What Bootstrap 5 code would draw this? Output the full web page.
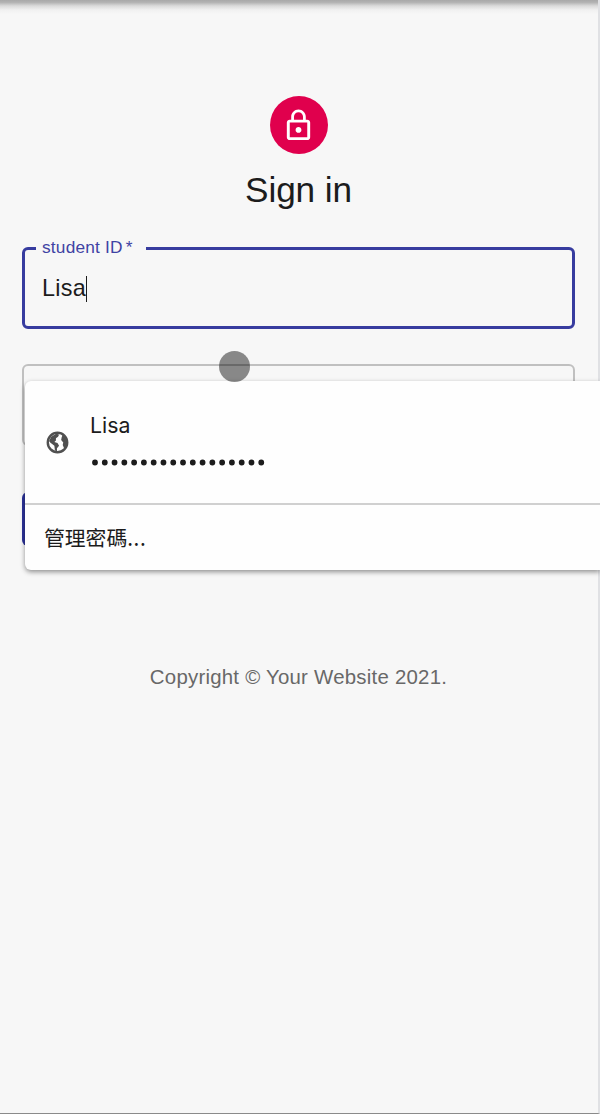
<!DOCTYPE html>
<html lang="zh-Hant">
<head>
<meta charset="utf-8">
<meta name="viewport" content="width=device-width, initial-scale=1">
<title>Sign in</title>
<link href="https://cdn.jsdelivr.net/npm/bootstrap@5.3.0/dist/css/bootstrap.min.css" rel="stylesheet">
<style>
  body { background: #f7f7f7; color: #1c1c1c; font-family: "Liberation Sans", Arial, sans-serif; height: 1114px; }
  .screen { height: 1114px; border-right: 2px solid #e0e1e4; border-bottom: 1px solid #8a8a8a; padding: 96px 23px 0 22px; }
  .top-shade { height: 14px; right: 2px; background: linear-gradient(#a8a8a8, #b4b4b4 18%, #dadada 42%, #f0f0f0 70%, #f7f7f7); }
  .avatar { width: 58px; height: 58px; background: #e0004d; }
  .title { font-size: 35.2px; line-height: 44px; margin: 14px 0 35px; letter-spacing: -.1px; font-weight: 400; }
  .field { height: 82px; border: 2px solid #c0c0c0; border-radius: 6px; }
  .field-active { border: 3px solid #373c9f; margin-bottom: 35px; padding: 2px 0 0 17px; font-size: 23.4px; letter-spacing: .25px; }
  .field-label { left: 11px; top: -15px; width: 110px; padding-left: 6px; line-height: 24px; background: #f7f7f7; color: #3f43a4; font-size: 17.3px; letter-spacing: .2px; }
  .label-star { margin-left: 3px; }
  .caret { width: 1.5px; height: 26px; background: #1c1c1c; }
  .submit { height: 54px; margin-top: 46px; background: #2c329a; border: 0; border-radius: 6px; }
  .copyright { margin-top: 116px; font-size: 20.4px; line-height: 30px; color: #686868; letter-spacing: .24px; }
  .suggest { left: 25px; top: 381px; width: 575px; height: 189px; background: #fefefe; border-radius: 6px 0 0 6px; box-shadow: 0 2px 5px rgba(0,0,0,.42); }
  .account { height: 124px; border-bottom: 2px solid #d0d0d0; padding-left: 21px; }
  .account-name { font-family: Inter, sans-serif; font-size: 21.3px; line-height: 28px; margin: 30px 0 20px 1px; }
  .manage { padding-left: 19px; font: 400 20.8px "Noto Sans CJK TC", sans-serif; height: 63px; }
  .manage-dots { letter-spacing: .6px; }
  .touch { left: 219px; top: 351px; width: 31px; height: 31px; background: rgba(0,0,0,.45); }
</style>
<script src="https://cdn.jsdelivr.net/npm/bootstrap@5.3.0/dist/js/bootstrap.bundle.min.js"></script>
</head>
<body class="position-relative overflow-hidden">
<div class="top-shade position-absolute top-0 start-0"></div>
<main class="screen">
  <div class="avatar rounded-circle d-flex align-items-center justify-content-center mx-auto">
    <svg width="35" height="35" viewBox="0 0 24 24" fill="#fff"><path d="M12 17c1.1 0 2-.9 2-2s-.9-2-2-2-2 .9-2 2 .9 2 2 2zm6-9h-1V6c0-2.76-2.24-5-5-5S7 3.24 7 6v2H6c-1.1 0-2 .9-2 2v10c0 1.1.9 2 2 2h12c1.1 0 2-.9 2-2V10c0-1.1-.9-2-2-2zM8.900 6c0-1.710 1.390-3.100 3.100-3.100s3.100 1.390 3.100 3.100v2H8.900V6zM18 20H6V10h12v10z"/></svg>
  </div>
  <h1 class="title text-center">Sign in</h1>
  <div class="field field-active position-relative d-flex align-items-center">
    <span class="field-label position-absolute">student ID<span class="label-star">*</span></span>
    <span>Lisa</span><span class="caret"></span>
  </div>
  <div class="field"></div>
  <div class="submit"></div>
  <p class="copyright text-center mb-0">Copyright © Your Website 2021.</p>
</main>
<div class="suggest position-absolute">
  <div class="account d-flex">
    <svg class="align-self-center flex-shrink-0" width="23" height="23" viewBox="0 0 22 22"><circle cx="11" cy="11" r="9.300" fill="#fefefe" stroke="#505050" stroke-width="2.300"/><path fill="#505050" d="M3 9.500 5 5.500 10 2.500 12.500 3.500 11.500 5.500 9.500 7 9.500 9 8 10.500 11 11.500 12.500 14 10.500 16.500 10.500 19.500 8.500 18.500 8 14 4 11ZM16 3.500 20 8 20 15 17.500 17 16 13.500 16.500 11 14.500 8.500 15 6Z"/></svg>
    <div class="ms-3 ps-1">
      <div class="account-name">Lisa</div>
      <svg class="d-block" width="180" height="8"><path d="M6 3.500H175" stroke="#1c1c1c" stroke-width="5.800" stroke-linecap="round" stroke-dasharray="0 9.780"/></svg>
    </div>
  </div>
  <div class="manage d-flex align-items-center">管理密碼<span class="manage-dots">...</span></div>
</div>
<div class="touch position-absolute rounded-circle"></div>
</body>
</html>
